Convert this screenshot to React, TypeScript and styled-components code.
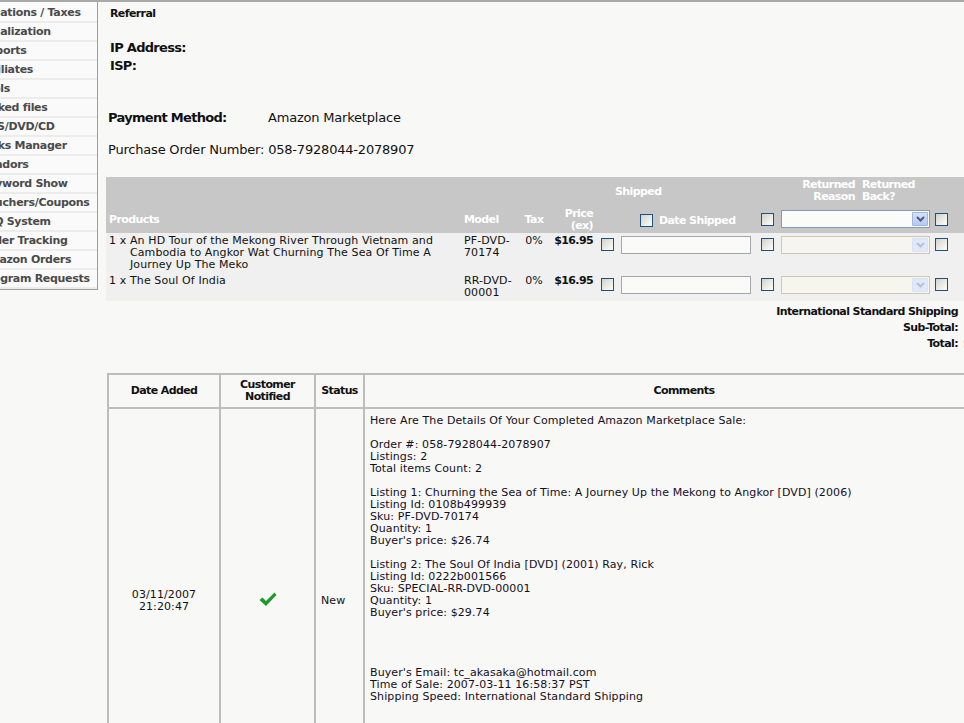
import React from 'react'
import styled, { createGlobalStyle, css } from 'styled-components'

const Global = createGlobalStyle`
    html, body {
        margin: 0;
        padding: 0;
        background: #f8f8f6;
        overflow: hidden;
    }
    body {
        font-family: Verdana, "DejaVu Sans", sans-serif;
        font-size: 11px;
        letter-spacing: 0.1px;
        color: #111;
    }
`

// DejaVu bold runs wider than Verdana bold, pull it in a bit
const bold = css`
    font-weight: bold;
    letter-spacing: -0.6px;
`

const Page = styled.div`
    display: flex;
    align-items: flex-start;
    width: 1140px;
    margin-left: -25px;
    border-top: 2px solid #a9a9a9;
`

const Sidebar = styled.nav`
    width: 122px;
    flex-shrink: 0;
    padding-top: 2px;
    background: #fafafa;
    border-right: 1px solid #9e9e9e;
    border-bottom: 1px solid #9e9e9e;
`

const MenuItem = styled.div`
    ${bold};
    letter-spacing: -0.3px;
    height: 17px;
    line-height: 17px;
    padding-left: 5px;
    border-bottom: 2px solid #ececea;
    color: #4a4a4a;
    white-space: nowrap;
`

const Main = styled.main`
    flex: 1;
    padding-left: 8px;
`

const Referral = styled.div`
    ${bold};
    margin: 5px 0 0 4px;
    line-height: 14px;
`

const InfoBlock = styled.div`
    ${bold};
    letter-spacing: -0.7px;
    margin: 18px 0 0 4px;
    font-size: 13px;
    line-height: 18px;
`

const PaymentRow = styled.div`
    display: flex;
    margin: 34px 0 0 2px;
    font-size: 13px;
    line-height: 18px;
    letter-spacing: -0.2px;
`

const PaymentLabel = styled.span`
    ${bold};
    letter-spacing: -0.7px;
    width: 160px;
`

const OrderNumber = styled.div`
    margin: 14px 0 0 2px;
    font-size: 13px;
    line-height: 18px;
    letter-spacing: -0.2px;
`

const COLS = '354px 59px 30px 47px 21px 138px 23px 154px 73px'

const ProductHead = styled.div`
    ${bold};
    display: grid;
    grid-template-columns: ${COLS};
    grid-template-rows: 28px 28px;
    margin-top: 18px;
    background: #c7c7c7;
    color: #fff;
    line-height: 12px;
`

const HeadCell = styled.div<{ $col: string; $row: number; $align?: string; $pad?: string }>`
    grid-column: ${(p) => p.$col};
    grid-row: ${(p) => p.$row};
    display: flex;
    align-items: center;
    justify-content: ${(p) => p.$align || 'flex-start'};
    text-align: ${(p) => (p.$align === 'flex-end' ? 'right' : p.$align === 'center' ? 'center' : 'left')};
    padding: ${(p) => p.$pad || '0'};
    gap: 7px;
`

const ReturnedLabel = styled.div<{ $w?: number }>`
    width: ${(p) => (p.$w ? p.$w + 'px' : 'auto')};
    text-align: ${(p) => (p.$w ? 'right' : 'left')};
`

const ProductBody = styled.div`
    background: #eff0ef;
`

const ProductRow = styled.div`
    display: grid;
    grid-template-columns: ${COLS};
    line-height: 12px;
    padding: 2px 0;

    b {
        ${bold};
    }
`

const Cell = styled.div<{ $align?: string; $pad?: string }>`
    text-align: ${(p) => p.$align || 'left'};
    padding: ${(p) => p.$pad || '0'};
`

const ProductName = styled.div`
    display: flex;
    padding-left: 3px;
    padding-right: 3px;

    span:first-child {
        width: 21px;
        flex-shrink: 0;
    }
`

const Check = styled.input.attrs({ type: 'checkbox' })`
    appearance: none;
    display: block;
    width: 13px;
    height: 13px;
    margin: 0;
    border: 1px solid #1c5180;
    background: linear-gradient(135deg, #d2d2cb 0%, #ebebe6 55%, #fdfdfc 100%);
`

const TextBox = styled.input.attrs({ type: 'text' })`
    display: block;
    box-sizing: border-box;
    width: 130px;
    height: 18px;
    margin: 0;
    border: 1px solid #a4a7a9;
    background: #fafaf9;
`

const SelectBox = styled.div<{ $disabled?: boolean }>`
    box-sizing: border-box;
    display: flex;
    justify-content: flex-end;
    align-items: center;
    width: 149px;
    height: 18px;
    padding: 1px;
    border: 1px solid ${(p) => (p.$disabled ? '#cbc8b6' : '#7f9db9')};
    background: ${(p) => (p.$disabled ? '#f6f5ee' : '#fbfbf9')};
`

const SelectButton = styled.div<{ $disabled?: boolean }>`
    box-sizing: border-box;
    display: flex;
    align-items: center;
    justify-content: center;
    width: 16px;
    height: 14px;
    border: 1px solid ${(p) => (p.$disabled ? '#d9e3f5' : '#a3b5d8')};
    border-radius: 1px;
    background: ${(p) => (p.$disabled ? '#e0e9f9' : 'linear-gradient(#d5e1fa, #b6c9f2)')};
    color: ${(p) => (p.$disabled ? '#b4c0d8' : '#4b5c7e')};
`

const Totals = styled.div`
    ${bold};
    display: grid;
    grid-template-columns: 852px 47px;
    margin-top: 3px;
    line-height: 16px;
`

const TotalLabel = styled.div`
    text-align: right;
`

const TotalValue = styled.div`
    padding-left: 5px;
    color: #d98c2a;
`

const History = styled.table`
    margin: 21px 0 0 1px;
    border-collapse: collapse;
    table-layout: fixed;
    width: 898px;

    th, td {
        border: 2px solid #bdbdbd;
        line-height: 12px;
    }

    th {
        ${bold};
        height: 32px;
        padding: 0;
        text-align: center;
    }
`

const DateCell = styled.td`
    text-align: center;
    vertical-align: middle;
`

const StatusCell = styled.td`
    padding-left: 5px;
    vertical-align: middle;
`

const CommentCell = styled.td`
    padding: 6px 5px 90px 5px;
    vertical-align: top;
    white-space: pre-wrap;
    color: #150d1c;
`

function Chevron() {
    return (
        <svg width="9" height="6" viewBox="0 0 9 6">
            <path d="M1 1 L4.5 4.5 L8 1" fill="none" stroke="currentColor" strokeWidth="2" />
        </svg>
    )
}

function Select({ disabled }: { disabled?: boolean }) {
    return (
        <SelectBox $disabled={disabled}>
            <SelectButton $disabled={disabled}>
                <Chevron />
            </SelectButton>
        </SelectBox>
    )
}

function CheckMark() {
    return (
        <svg width="18" height="15" viewBox="0 0 18 15">
            <path d="M0.5 8 L3.5 5.5 L7 9 L15.5 0.5 L17.5 3 L7 14 Z" fill="#1d9b2a" />
        </svg>
    )
}

const menu = [
    'Locations / Taxes',
    'Localization',
    'Reports',
    'Affiliates',
    'Tools',
    'Linked files',
    'VHS/DVD/CD',
    'Links Manager',
    'Vendors',
    'Keyword Show',
    'Vouchers/Coupons',
    'FAQ System',
    'Order Tracking',
    'Amazon Orders',
    'Program Requests',
]

const products = [
    {
        qty: 1,
        name: 'An HD Tour of the Mekong River Through Vietnam and Cambodia to Angkor Wat Churning The Sea Of Time A Journey Up The Meko',
        model: ['PF-DVD-', '70174'],
        tax: '0%',
        price: '$16.95',
    },
    { qty: 1, name: 'The Soul Of India', model: ['RR-DVD-', '00001'], tax: '0%', price: '$16.95' },
]

const comment = `Here Are The Details Of Your Completed Amazon Marketplace Sale:

Order #: 058-7928044-2078907
Listings: 2
Total items Count: 2

Listing 1: Churning the Sea of Time: A Journey Up the Mekong to Angkor [DVD] (2006)
Listing Id: 0108b499939
Sku: PF-DVD-70174
Quantity: 1
Buyer's price: $26.74

Listing 2: The Soul Of India [DVD] (2001) Ray, Rick
Listing Id: 0222b001566
Sku: SPECIAL-RR-DVD-00001
Quantity: 1
Buyer's price: $29.74




Buyer's Email: tc_akasaka@hotmail.com
Time of Sale: 2007-03-11 16:58:37 PST
Shipping Speed: International Standard Shipping`

export default function App() {
    return (
        <>
            <Global />
            <Page>
                <Sidebar>
                    {menu.map((item) => (
                        <MenuItem key={item}>{item}</MenuItem>
                    ))}
                </Sidebar>
                <Main>
                    <Referral>Referral</Referral>
                    <InfoBlock>
                        <div>IP Address:</div>
                        <div>ISP:</div>
                    </InfoBlock>
                    <PaymentRow>
                        <PaymentLabel>Payment Method:</PaymentLabel>
                        <span>Amazon Marketplace</span>
                    </PaymentRow>
                    <OrderNumber>Purchase Order Number: 058-7928044-2078907</OrderNumber>

                    <ProductHead>
                        <HeadCell $col="5 / 7" $row={1} $pad="2px 0 0 19px">Shipped</HeadCell>
                        <HeadCell $col="7 / 10" $row={1} $pad="0 0 0 40px">
                            <ReturnedLabel $w={60}>Returned<br />Reason</ReturnedLabel>
                            <ReturnedLabel>Returned<br />Back?</ReturnedLabel>
                        </HeadCell>
                        <HeadCell $col="1" $row={2} $pad="2px 0 0 3px">Products</HeadCell>
                        <HeadCell $col="2" $row={2} $pad="2px 0 0 4px">Model</HeadCell>
                        <HeadCell $col="3" $row={2} $align="center" $pad="2px 0 0 0">Tax</HeadCell>
                        <HeadCell $col="4" $row={2} $align="flex-end" $pad="2px 3px 0 0">Price<br />(ex)</HeadCell>
                        <HeadCell $col="5 / 7" $row={2} $pad="4px 0 0 44px">
                            <Check style={{ marginTop: -2 }} />
                            <span style={{ marginLeft: -1 }}>Date Shipped</span>
                        </HeadCell>
                        <HeadCell $col="7" $row={2} $pad="0 0 0 6px"><Check /></HeadCell>
                        <HeadCell $col="8" $row={2} $pad="0 0 0 3px"><Select /></HeadCell>
                        <HeadCell $col="9" $row={2} $pad="0 0 0 3px"><Check /></HeadCell>
                    </ProductHead>
                    <ProductBody>
                        {products.map((p) => (
                            <ProductRow key={p.name}>
                                <ProductName>
                                    <span>{p.qty} x</span>
                                    <span>{p.name}</span>
                                </ProductName>
                                <Cell $pad="0 0 0 4px">{p.model[0]}<wbr />{p.model[1]}</Cell>
                                <Cell $align="center">{p.tax}</Cell>
                                <Cell $align="right" $pad="0 3px 0 0"><b>{p.price}</b></Cell>
                                <Cell $pad="3px 0 0 5px"><Check /></Cell>
                                <Cell $pad="1px 0 0 4px"><TextBox /></Cell>
                                <Cell $pad="3px 0 0 6px"><Check /></Cell>
                                <Cell $pad="1px 0 0 3px"><Select disabled /></Cell>
                                <Cell $pad="3px 0 0 3px"><Check /></Cell>
                            </ProductRow>
                        ))}
                    </ProductBody>

                    <Totals>
                        <TotalLabel>International Standard Shipping</TotalLabel>
                        <TotalValue />
                        <TotalLabel>Sub-Total:</TotalLabel>
                        <TotalValue />
                        <TotalLabel>Total:</TotalLabel>
                        <TotalValue>$33.90</TotalValue>
                    </Totals>

                    <History>
                        <colgroup>
                            <col style={{ width: 112 }} />
                            <col style={{ width: 95 }} />
                            <col style={{ width: 49 }} />
                            <col />
                        </colgroup>
                        <thead>
                            <tr>
                                <th>Date Added</th>
                                <th>Customer<br />Notified</th>
                                <th>Status</th>
                                <th>Comments</th>
                            </tr>
                        </thead>
                        <tbody>
                            <tr>
                                <DateCell>03/11/2007<br />21:20:47</DateCell>
                                <DateCell><CheckMark /></DateCell>
                                <StatusCell>New</StatusCell>
                                <CommentCell>{comment}</CommentCell>
                            </tr>
                        </tbody>
                    </History>
                </Main>
            </Page>
        </>
    )
}
